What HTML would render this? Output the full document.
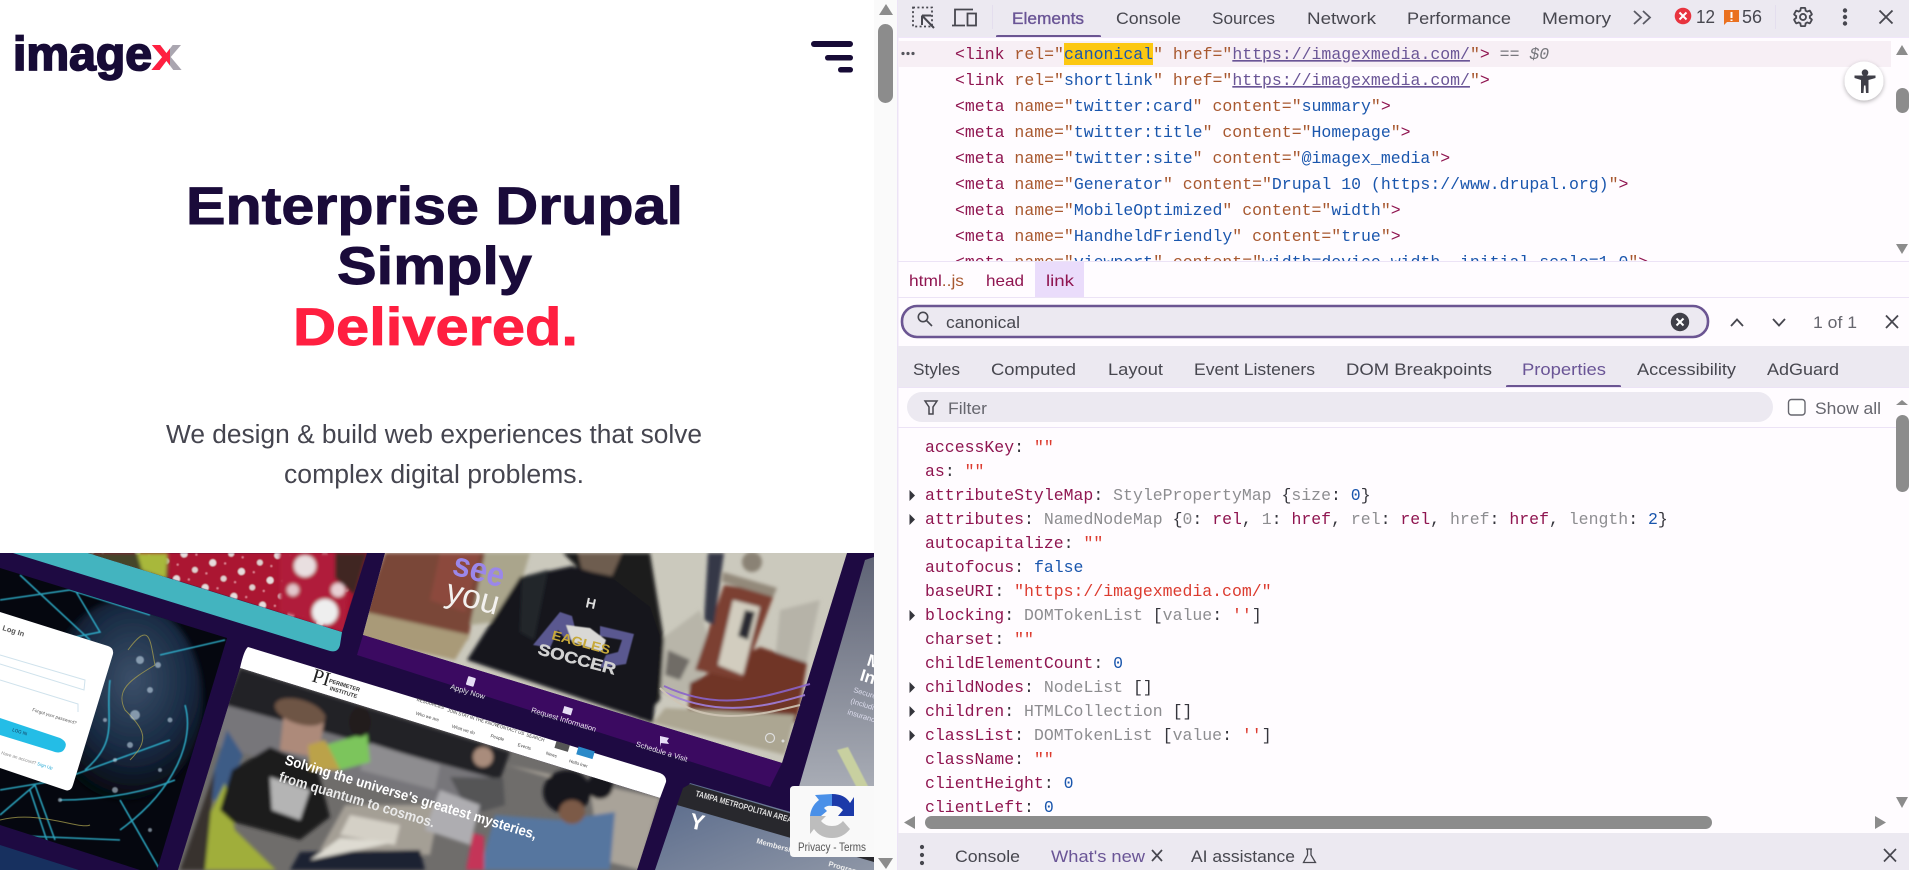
<!DOCTYPE html>
<html><head><meta charset="utf-8"><title>imagex</title>
<style>
html,body{margin:0;padding:0;background:#fff;width:1909px;height:870px;overflow:hidden}
svg{display:block}
text{white-space:pre}
.m{font-family:"Liberation Mono",monospace;font-size:16.5px}
.u{font-family:"Liberation Sans",sans-serif;font-size:16.5px;fill:#47474f}
.t{fill:#8f1550}.a{fill:#a8582f}.v{fill:#1a56ad}.l{fill:#6a5596;text-decoration:underline}.q{fill:#a8582f}.d{fill:#8f1550}
.k{fill:#8f1550}.c{fill:#35353c}.s{fill:#dc3b2f}.g{fill:#8d8d90}.n{fill:#1a56ad}
.w{font-family:"Liberation Sans",sans-serif;fill:#fff}
</style></head><body>
<svg xmlns="http://www.w3.org/2000/svg" width="1909" height="870" viewBox="0 0 1909 870">
<defs>
<clipPath id="hero"><rect x="0" y="553" width="874" height="317"/></clipPath>
<clipPath id="rx"><rect x="145" y="35" width="25" height="45"/></clipPath>
<clipPath id="el"><rect x="898" y="41" width="993" height="220"/></clipPath>
<clipPath id="pr"><rect x="898" y="428" width="993" height="384"/></clipPath>
<clipPath id="net"><path d="M0 568L227 638L157 870L140 870L0 825Z"/></clipPath>
<clipPath id="pi"><path d="M240 668L660 798L637 870L178 870Z"/></clipPath>
<clipPath id="ph"><path d="M385 553L847 553L782 763L363 635Z"/></clipPath>
<clipPath id="fl"><path d="M88 553L367 553L342 632Z"/></clipPath>
<filter id="b1" x="-5%" y="-5%" width="110%" height="110%"><feGaussianBlur stdDeviation="1.8"/></filter>
<filter id="b2" x="-10%" y="-10%" width="120%" height="120%"><feGaussianBlur stdDeviation="3"/></filter>
<filter id="b0"><feGaussianBlur stdDeviation="0.45"/></filter>
<filter id="sh" x="-30%" y="-30%" width="160%" height="160%"><feDropShadow dx="0" dy="1.5" stdDeviation="2" flood-color="#000" flood-opacity=".3"/></filter>
<pattern id="dots" width="30" height="26" patternUnits="userSpaceOnUse" patternTransform="rotate(17)"><rect width="30" height="26" fill="#ab1230"/><circle cx="8" cy="8" r="3.6" fill="#e6dcdc"/><circle cx="23" cy="20" r="3" fill="#e0d0d0"/><circle cx="20" cy="5" r="1" fill="#e9a"/><circle cx="5" cy="20" r="1" fill="#e9a"/></pattern>
<linearGradient id="gr1" x1="0" y1="0" x2="0" y2="1"><stop offset="0" stop-color="#5f6476"/><stop offset="1" stop-color="#a9adb6"/></linearGradient>
<linearGradient id="gr2" x1="0" y1="0" x2="1" y2="1"><stop offset="0" stop-color="#56688a"/><stop offset="1" stop-color="#8e96a6"/></linearGradient>
<radialGradient id="glob" cx=".55" cy=".4" r=".6"><stop offset="0" stop-color="#3c506a"/><stop offset=".6" stop-color="#182a42"/><stop offset="1" stop-color="#04070e"/></radialGradient>
</defs>

<!-- LEFT PAGE -->
<rect x="0" y="0" width="874" height="870" fill="#fff"/>
<rect x="874" y="0" width="23" height="870" fill="#fafafa"/>
<path d="M886 4L893 15H879Z" fill="#8c8c8c"/>
<rect x="878" y="24" width="15" height="79" rx="7.5" fill="#8c8c8c"/>
<path d="M886 869L893 858H878Z" fill="#8c8c8c"/>

<!-- logo -->
<text x="13" y="70" font-family="Liberation Sans,sans-serif" font-weight="700" font-size="47" fill="#170b36" stroke="#170b36" stroke-width="1.8" textLength="139" lengthAdjust="spacingAndGlyphs">image</text>
<text x="151" y="70" font-family="Liberation Sans,sans-serif" font-weight="700" font-size="47" fill="#aaa6b0" textLength="31" lengthAdjust="spacingAndGlyphs">x</text>
<text x="151" y="70" font-family="Liberation Sans,sans-serif" font-weight="700" font-size="47" fill="#ff1f40" textLength="31" lengthAdjust="spacingAndGlyphs" clip-path="url(#rx)">x</text>
<!-- hamburger -->
<g fill="#170b36"><rect x="811" y="41" width="42" height="6" rx="3"/><rect x="825" y="55" width="28" height="5.5" rx="2.7"/><rect x="838" y="67" width="15" height="5.5" rx="2.7"/></g>

<g font-family="Liberation Sans,sans-serif" font-weight="700" font-size="53" fill="#1a0b3a" stroke="#1a0b3a" stroke-width=".9" text-anchor="start">
<text x="186" y="224" textLength="497" lengthAdjust="spacingAndGlyphs">Enterprise Drupal</text>
<text x="337" y="284" textLength="195" lengthAdjust="spacingAndGlyphs">Simply</text>
<text x="293" y="345" textLength="285" lengthAdjust="spacingAndGlyphs" fill="#ff1f40" stroke="#ff1f40">Delivered.</text>
</g>
<g font-family="Liberation Sans,sans-serif" font-size="25.5" fill="#45454f">
<text x="166" y="443" textLength="536" lengthAdjust="spacingAndGlyphs">We design &amp; build web experiences that solve</text>
<text x="284" y="483" textLength="300" lengthAdjust="spacingAndGlyphs">complex digital problems.</text>
</g>

<!-- HERO collage -->
<g clip-path="url(#hero)">
<rect x="0" y="553" width="874" height="317" fill="#1e0a42"/>
<!-- teal + flowers -->
<path d="M13 553L330 651Q338 653 340 645L342 632L88 553Z" fill="#43b4bf"/>
<g clip-path="url(#fl)">
<path d="M88 553L367 553L342 632Z" fill="url(#dots)" filter="url(#b0)"/>
<g filter="url(#b1)">
<path d="M80 553L168 553L168 580L80 555Z" fill="#45452a"/><path d="M137 553L168 553L166 579L142 570Z" fill="#a8b83a"/>
<path d="M280 553L350 553L345 632L280 612Z" fill="#b01a3a"/>
<circle cx="305" cy="566" r="11" fill="#e9dfe0"/><circle cx="325" cy="612" r="13" fill="#eee"/><circle cx="293" cy="590" r="6" fill="#e3c7cc"/><circle cx="338" cy="590" r="7" fill="#e8d0d4"/>
<path d="M335 553L367 553L355 595L335 578Z" fill="#3f2622"/>
</g></g>
<!-- top middle photo -->
<path d="M385 553L847 553L782 763L363 635Z" fill="#cbc9bd"/>
<g clip-path="url(#ph)"><g filter="url(#b1)">
<path d="M385 553L485 553L468 640L363 612Z" fill="#7a4738"/>
<path d="M440 553L480 553L465 612L430 600Z" fill="#8c4a3c"/>
<path d="M366 612L470 635L455 660L360 640Z" fill="#a99a78"/>
<path d="M485 553L530 553L510 620L470 625Z" fill="#aaa58c"/>
<!-- bushes -->
<path d="M780 610L820 600L805 670L775 660Z" fill="#b6b3a8"/>
<path d="M660 640L700 610L715 660L680 700L655 690Z" fill="#b8b5a9"/>
<path d="M668 650L690 660L680 680L665 675Z" fill="#6f6c66"/>
<!-- pillar -->
<path d="M760 647L807 663L797 723L688 713L690 683Z" fill="#6f3428"/>
<path d="M724 585L775 592L742 680L695 670Z" fill="#7c3f32"/>
<path d="M733 600L760 607L743 675L718 665Z" fill="#d2cdbf"/>
<path d="M745 610L755 612L748 640L738 636Z" fill="#2c2c30"/>
<path d="M723 572L777 588L773 597L722 582Z" fill="#93897a"/>
<circle cx="752" cy="562" r="10" fill="#8a8274"/>
<path d="M708 553L724 553L714 625L704 620Z" fill="#343846"/>
<path d="M665 708L795 715L785 755L653 723Z" fill="#aca692"/>
<!-- hair -->
<path d="M563 553L650 553L664 640L660 700L640 720L620 640L600 590Z" fill="#1d1b1c"/>
<path d="M578 553L622 553L612 576L582 570Z" fill="#6e5d50"/>
<!-- shirt -->
<path d="M520 577L572 566L612 578L650 607L661 640L653 723L467 660Z" fill="#12161d"/>
<path d="M522 577L548 570L534 640L520 632Z" fill="#24262c"/>
</g></g>
<!-- eagle logo -->
<g filter="url(#b0)">
<path d="M533 645L560 612L572 616L578 640L566 640L558 630L550 648Z" fill="#5a5890"/>
<path d="M600 626L634 634L626 664L600 668L606 655L618 652L622 640L600 636Z" fill="#5a5890"/>
<path d="M566 625L590 628L606 640L602 652L572 642Z" fill="#d9d8d5"/>
</g>
<text transform="translate(551 639) rotate(15)" font-family="Liberation Sans,sans-serif" font-weight="700" font-size="13" fill="#c7a93a" textLength="60" lengthAdjust="spacingAndGlyphs">EAGLES</text>
<text transform="translate(537 654) rotate(15)" font-family="Liberation Sans,sans-serif" font-weight="700" font-size="16" fill="#d2d2d2" stroke="#d2d2d2" stroke-width=".4" textLength="80" lengthAdjust="spacingAndGlyphs">SOCCER</text>
<text transform="translate(585 607) rotate(12)" font-family="Liberation Sans,sans-serif" font-weight="700" font-size="14" fill="#ddd">H</text>
<!-- lines -->
<g fill="none" stroke-width="2" opacity=".9">
<path d="M664 686C720 712 760 698 810 684" stroke="#8a63c9"/><path d="M662 691C720 720 770 705 805 695" stroke="#a07fdc"/><path d="M660 688C700 730 760 715 800 705" stroke="#cfc5b5"/>
</g>
<circle cx="770" cy="738" r="4.5" fill="none" stroke="#ddd" stroke-width="1.2"/><circle cx="783" cy="741" r="1.5" fill="#ddd"/>
<!-- see you -->
<text transform="translate(451 574) rotate(15)" font-family="Liberation Sans,sans-serif" font-weight="700" font-size="34" fill="#9b87ea" textLength="52" lengthAdjust="spacingAndGlyphs">see</text>
<text transform="translate(444 601) rotate(15)" font-family="Liberation Sans,sans-serif" font-size="34" fill="#f3f1ef" textLength="54" lengthAdjust="spacingAndGlyphs">you</text>
<!-- purple band -->
<path d="M363 635L782 763L770 787L357 655Z" fill="#3b0a61"/>
<g class="w" font-size="7.5" opacity=".9" text-anchor="middle">
<text transform="translate(467 694) rotate(17)">Apply Now</text>
<text transform="translate(563 722) rotate(17)">Request Information</text>
<text transform="translate(661 754) rotate(17)">Schedule a Visit</text>
</g>
<rect x="467" y="677" width="8" height="9" rx="1" fill="#e6ddf5" transform="rotate(17 471 681)"/>
<rect x="563" y="707" width="9" height="7" fill="#e6ddf5" transform="rotate(17 567 711)"/>
<path d="M660 736l9 2-2 3 2 3-8-1-1 4z" fill="#e6ddf5"/>

<!-- network panel -->
<path d="M0 568L227 638L157 870L140 870L0 825Z" fill="#05070f"/>
<g clip-path="url(#net)">
<ellipse cx="125" cy="700" rx="78" ry="100" fill="url(#glob)" filter="url(#b2)"/>
<g fill="none" stroke="#33bcd8" stroke-width="1.6" opacity=".85" filter="url(#b0)">
<path d="M0 600L70 590L150 615"/><path d="M75 590L100 632L60 640"/><path d="M160 655L225 640"/>
<path d="M110 680C105 720 120 740 85 770"/><path d="M185 705C195 740 175 790 120 830"/>
<path d="M0 790L60 780L170 740"/><path d="M0 815L35 785L55 840M30 790L50 850"/><path d="M60 800C110 800 150 790 175 780"/>
<path d="M120 800L160 870"/><path d="M20 575L90 640"/><path d="M0 835L120 840"/>
</g>
<g fill="none" stroke="#a9a04e" stroke-width="1" opacity=".75"><path d="M128 650C150 620 150 640 155 665C130 680 115 690 125 710C145 730 150 740 130 760"/><path d="M0 820C40 810 80 830 90 825"/></g>
<g fill="#cfe3f2" opacity=".55" filter="url(#b0)"><circle cx="150" cy="690" r="3"/><circle cx="170" cy="720" r="2.5"/><circle cx="130" cy="745" r="3"/><circle cx="115" cy="760" r="2"/><circle cx="160" cy="770" r="2"/><circle cx="105" cy="720" r="2"/><circle cx="140" cy="660" r="4"/><circle cx="60" cy="800" r="2"/><circle cx="150" cy="830" r="2"/><circle cx="135" cy="715" r="5"/><circle cx="158" cy="665" r="3"/><circle cx="115" cy="790" r="3"/></g>
</g>
<!-- login card -->
<path d="M0 612L108 646Q114 648 113 654L73 785Q71 792 65 790L0 768Z" fill="#fff"/>
<path d="M0 718L60 738Q68 742 65 748Q62 755 52 751L0 735Z" fill="#24bde6"/>
<g fill="none" stroke="#cfe2ec" stroke-width="1"><path d="M0 655L85 680L84 690L0 664"/><path d="M0 680L78 704L78 712"/></g>
<text transform="translate(2 630) rotate(17)" font-family="Liberation Sans,sans-serif" font-weight="700" font-size="7.5" fill="#555">Log In</text>
<g font-family="Liberation Sans,sans-serif" font-size="4.5" fill="#888">
<text transform="translate(32 711) rotate(17)" fill="#555">Forgot your password?</text>
<text transform="translate(12 731) rotate(17)" fill="#135">LOG IN</text>
<text transform="translate(1 754) rotate(17)">Have an account? <tspan fill="#24a9d6">Sign Up</tspan></text>
</g>
<!-- bottom-left blue -->
<path d="M0 845L85 872L0 872Z" fill="#17305f"/>

<!-- PI panel -->
<path d="M248 647Q244 650 240 668L660 798L666 782Q667 776 660 773Z" fill="#fff"/>
<path d="M240 668L660 798L637 870L178 870Z" fill="#6f6d6b"/>
<g clip-path="url(#pi)">
<g filter="url(#b1)">
<path d="M240 668L510 752L500 780L225 705Z" fill="#232327"/>
<path d="M225 705L500 780L480 815L212 745Z" fill="#77767a"/>
<path d="M370 743L440 765L435 790L360 770Z" fill="#8e8d90"/>
<path d="M345 805L440 805L430 855L320 850Z" fill="#a49f95"/>
<path d="M227 730L243 755L220 810L208 790Z" fill="#3e5c86"/>
<path d="M207 820L225 783L235 830L276 870L200 870Z" fill="#a0ae3a"/>
<path d="M180 870L215 770L205 870Z" fill="#38322f"/>
<path d="M220 810L232 770L270 747L317 767L330 817L300 840L233 822Z" fill="#1b1b1e"/>
<path d="M270 777L310 790L300 820L272 810Z" fill="#b4b4b4"/>
<path d="M285 702L325 715L318 758L280 750Z" fill="#ad8a7a"/>
<ellipse cx="300" cy="712" rx="26" ry="12" fill="#6e5444" transform="rotate(17 300 712)"/>
<path d="M325 745L367 733L370 762L340 770Z" fill="#7cc55b"/>
<ellipse cx="360" cy="722" rx="11" ry="15" fill="#241e1c"/>
<path d="M308 745L325 740L340 770L310 770Z" fill="#bba24a"/>
<path d="M450 777L503 778L505 805L470 815Z" fill="#555556"/>
<circle cx="483" cy="757" r="10" fill="#a98c7c"/>
<path d="M440 790L480 805L470 845L425 830Z" fill="#aeadb1"/>
<path d="M507 765L660 798L640 870L600 860L590 790Z" fill="#a9a399"/>
<path d="M495 815L560 820L615 812L610 870L480 870Z" fill="#56769f"/>
<ellipse cx="567" cy="792" rx="24" ry="22" fill="#16161b"/>
<ellipse cx="572" cy="812" rx="13" ry="12" fill="#7c5a47"/>
<circle cx="600" cy="786" r="13" fill="#16161b"/>
<path d="M473 833L484 836L484 870L466 870Z" fill="#c43658"/>
<path d="M350 815L400 825L395 845L340 835Z" fill="#d4d0c6"/>
<path d="M300 852L420 850L425 870L290 870Z" fill="#1a2030"/>
<path d="M340 838L395 842L310 860Z" fill="#dedbd2"/>
</g>
</g>
<text transform="translate(284 764) rotate(16.7)" font-family="Liberation Sans,sans-serif" font-weight="700" font-size="14.4" fill="#fff" textLength="262" lengthAdjust="spacingAndGlyphs">Solving the universe's greatest mysteries,</text>
<text transform="translate(278 781) rotate(16.7)" font-family="Liberation Sans,sans-serif" font-weight="700" font-size="14.4" fill="#e9e9e9" textLength="162" lengthAdjust="spacingAndGlyphs">from quantum to cosmos.</text>
<text transform="translate(311 681) rotate(17)" font-family="Liberation Serif,serif" font-size="20" fill="#222">PI</text>
<g font-family="Liberation Sans,sans-serif" font-weight="700" font-size="5.5" fill="#333" text-anchor="middle"><text transform="translate(344 687) rotate(17)">PERIMETER</text><text transform="translate(343 694) rotate(17)">INSTITUTE</text></g>
<g font-family="Liberation Sans,sans-serif" font-size="4.5" fill="#444" text-anchor="middle">
<text transform="translate(430 705) rotate(17)">RESOURCES</text><text transform="translate(427 718) rotate(17)">Who we are</text><text transform="translate(452 713) rotate(17)">JOIN</text><text transform="translate(478 721) rotate(17)">STAY IN THE KNOW</text><text transform="translate(510 731) rotate(17)">CONTACT US</text><text transform="translate(535 739) rotate(17)">SEARCH</text><text transform="translate(463 731) rotate(17)">What we do</text><text transform="translate(497 739) rotate(17)">People</text><text transform="translate(524 748) rotate(17)">Events</text><text transform="translate(551 756) rotate(17)">News</text><text transform="translate(578 765) rotate(17)">Hello Iner</text>
</g>
<rect x="577" y="749" width="17" height="8" fill="#2b8ac9" transform="rotate(17 586 753)"/>
<rect x="555" y="743" width="14" height="7" fill="#555" transform="rotate(17 562 747)"/>

<!-- right gray panel -->
<path d="M865 560L874 557L874 790L798 790Z" fill="url(#gr1)"/>
<path d="M837 750L848 747L870 790L858 790Z" fill="#c8d0a0" filter="url(#b0)"/>
<g font-family="Liberation Sans,sans-serif" fill="#fff"><text transform="translate(866 665) rotate(17)" font-size="17" font-weight="700">M</text><text transform="translate(859 680) rotate(17)" font-size="17" font-weight="700">In</text>
<text transform="translate(853 692) rotate(17)" font-size="7.5" fill="#dde">Secure</text><text transform="translate(850 703) rotate(17)" font-size="7.5" fill="#dde">(Includi</text><text transform="translate(847 714) rotate(17)" font-size="7.5" fill="#dde">insuranc</text></g>

<!-- Tampa panel -->
<path d="M690 783L874 836L874 870L655 870L677 805Z" fill="url(#gr2)"/>
<path d="M690 784L874 838L874 862L677 805L683 788Z" fill="#28282d"/>
<text transform="translate(695 796) rotate(15.5)" font-family="Liberation Sans,sans-serif" font-weight="700" font-size="8.5" fill="#ddd" textLength="100" lengthAdjust="spacingAndGlyphs">TAMPA METROPOLITAN AREA</text>
<text x="690" y="830" transform="rotate(12 700 822)" font-family="Liberation Sans,sans-serif" font-weight="700" font-size="22" fill="#fff">Y</text>
<text transform="translate(756 843) rotate(15.5)" font-family="Liberation Sans,sans-serif" font-weight="700" font-size="7.5" fill="#eee">Membership</text>
<text transform="translate(828 866) rotate(15.5)" font-family="Liberation Sans,sans-serif" font-weight="700" font-size="7.5" fill="#eee">Programs</text>
</g>

<!-- reCAPTCHA -->
<path d="M794 786H874V857H794Q790 857 790 853V790Q790 786 794 786Z" fill="#f9f9f9"/>
<path d="M810 816Q811 806 819 800L815 795L832 794L832 806Q827 805 824 808L827 811L821 816Z" fill="#4a90e8"/>
<path d="M832 794Q845 794 850 803L854 797L854 816L838 816L843 810Q839 805 832 806Z" fill="#1c3aa9"/>
<path d="M810 816L826 816L821 821Q825 826 832 826Q839 826 843 821L850 829Q843 838 832 838Q820 838 814 829L810 834Z" fill="#bdbdbd"/>
<text x="798" y="851" font-family="Liberation Sans,sans-serif" font-size="12" fill="#555" textLength="68" lengthAdjust="spacingAndGlyphs">Privacy - Terms</text>

<!-- DEVTOOLS -->
<rect x="897" y="0" width="1012" height="870" fill="#fffcff"/>
<rect x="897" y="0" width="1.5" height="870" fill="#ece3f6"/>
<rect x="898" y="0" width="1011" height="37" fill="#ece9f1"/>
<rect x="898" y="37" width="1011" height="1" fill="#f0e6fa"/>
<!-- top icons -->
<g fill="none" stroke="#47474f" stroke-width="1.8">
<rect x="913" y="7.5" width="19" height="19" stroke-dasharray="2 2.4"/>
<path d="M922 15.5H931M922 15.5V25M922.5 16L934 28" stroke-width="2"/>
<path d="M952 25.5H965M955 25V9.5H973"/>
<rect x="967.5" y="13.5" width="8.5" height="12"/>
</g>
<rect x="992" y="5" width="1" height="24" fill="#e4deee"/>
<g class="u">
<text x="1012" y="24" style="fill:#6a5596" stroke="#6a5596" stroke-width=".35" textLength="72" lengthAdjust="spacingAndGlyphs">Elements</text>
<text x="1116" y="24" textLength="65" lengthAdjust="spacingAndGlyphs">Console</text>
<text x="1212" y="24" textLength="63" lengthAdjust="spacingAndGlyphs">Sources</text>
<text x="1307" y="24" textLength="69" lengthAdjust="spacingAndGlyphs">Network</text>
<text x="1407" y="24" textLength="104" lengthAdjust="spacingAndGlyphs">Performance</text>
<text x="1542" y="24" textLength="69" lengthAdjust="spacingAndGlyphs">Memory</text>
</g>
<path d="M996 37V36Q996 35 998 35H1099Q1101 35 1101 36V37Z" fill="#6b5592"/>
<g fill="none" stroke="#5a5a64" stroke-width="1.8"><path d="M1634 11L1641 17.5L1634 24M1643 11L1650 17.5L1643 24"/></g>
<circle cx="1683" cy="16" r="8.3" fill="#e8343f"/>
<path d="M1679.5 12.5L1686.5 19.5M1686.5 12.5L1679.5 19.5" stroke="#fff" stroke-width="2"/>
<text class="u" x="1696" y="23" style="font-size:18px" textLength="19" lengthAdjust="spacingAndGlyphs">12</text>
<path d="M1724 10H1739V22H1727L1724 25Z" fill="#ea7120"/>
<path d="M1731.5 12V18M1731.5 19.5V21" stroke="#fff" stroke-width="2"/>
<text class="u" x="1742" y="23" style="font-size:18px" textLength="20" lengthAdjust="spacingAndGlyphs">56</text>
<rect x="1775" y="5" width="1" height="24" fill="#e4deee"/>
<g transform="translate(1791.6 5.6) scale(.95)" fill="none" stroke="#47474f" stroke-width="1.9"><path d="M19.14,12.94c0.04-0.3,0.06-0.61,0.06-0.94c0-0.32-0.02-0.64-0.07-0.94l2.03-1.58c0.18-0.14,0.23-0.41,0.12-0.61 l-1.92-3.32c-0.12-0.22-0.37-0.29-0.59-0.22l-2.39,0.96c-0.5-0.38-1.03-0.7-1.62-0.94L14.4,2.81c-0.04-0.24-0.24-0.41-0.48-0.41 h-3.84c-0.24,0-0.43,0.17-0.47,0.41L9.25,5.35C8.66,5.59,8.12,5.92,7.63,6.29L5.24,5.33c-0.22-0.08-0.47,0-0.59,0.22L2.74,8.87 C2.62,9.08,2.66,9.34,2.86,9.48l2.03,1.58C4.84,11.36,4.8,11.69,4.8,12s0.02,0.64,0.07,0.94l-2.03,1.58 c-0.18,0.14-0.23,0.41-0.12,0.61l1.92,3.32c0.12,0.22,0.37,0.29,0.59,0.22l2.39-0.96c0.5,0.38,1.03,0.7,1.62,0.94l0.36,2.54 c0.05,0.24,0.24,0.41,0.48,0.41h3.84c0.24,0,0.44-0.17,0.47-0.41l0.36-2.54c0.59-0.24,1.13-0.56,1.62-0.94l2.39,0.96 c0.22,0.08,0.47,0,0.59-0.22l1.92-3.32c0.12-0.22,0.07-0.47-0.12-0.61L19.14,12.94z"/><circle cx="12" cy="12" r="3.2"/></g>
<g fill="#47474f"><circle cx="1845" cy="10.5" r="2.2"/><circle cx="1845" cy="17" r="2.2"/><circle cx="1845" cy="23.5" r="2.2"/></g>
<path d="M1879.5 10.5L1892.5 23.5M1892.5 10.5L1879.5 23.5" stroke="#47474f" stroke-width="1.9"/>

<!-- elements tree -->
<rect x="898" y="41" width="993" height="26" fill="#f7eff5"/>
<rect x="1064" y="43" width="89" height="22" fill="#fcc812"/>
<g fill="#55555c"><circle cx="903" cy="53.5" r="1.6"/><circle cx="908" cy="53.5" r="1.6"/><circle cx="913" cy="53.5" r="1.6"/></g>
<g class="m" clip-path="url(#el)">
<text x="955" y="59"><tspan class="t">&lt;link</tspan> <tspan class="a">rel</tspan><tspan class="q">="</tspan><tspan class="v">canonical</tspan><tspan class="q">"</tspan> <tspan class="a">href</tspan><tspan class="q">="</tspan><tspan class="l">https://imagexmedia.com/</tspan><tspan class="q">"</tspan><tspan class="t">&gt;</tspan> <tspan fill="#77777d">== </tspan><tspan fill="#77777d" font-style="italic">$0</tspan></text>
<text x="955" y="85"><tspan class="t">&lt;link</tspan> <tspan class="a">rel</tspan><tspan class="q">="</tspan><tspan class="v">shortlink</tspan><tspan class="q">"</tspan> <tspan class="a">href</tspan><tspan class="q">="</tspan><tspan class="l">https://imagexmedia.com/</tspan><tspan class="q">"</tspan><tspan class="t">&gt;</tspan></text>
<text x="955" y="111"><tspan class="t">&lt;meta</tspan> <tspan class="a">name</tspan><tspan class="q">="</tspan><tspan class="v">twitter:card</tspan><tspan class="q">"</tspan> <tspan class="a">content</tspan><tspan class="q">="</tspan><tspan class="v">summary</tspan><tspan class="q">"</tspan><tspan class="t">&gt;</tspan></text>
<text x="955" y="137"><tspan class="t">&lt;meta</tspan> <tspan class="a">name</tspan><tspan class="q">="</tspan><tspan class="v">twitter:title</tspan><tspan class="q">"</tspan> <tspan class="a">content</tspan><tspan class="q">="</tspan><tspan class="v">Homepage</tspan><tspan class="q">"</tspan><tspan class="t">&gt;</tspan></text>
<text x="955" y="163"><tspan class="t">&lt;meta</tspan> <tspan class="a">name</tspan><tspan class="q">="</tspan><tspan class="v">twitter:site</tspan><tspan class="q">"</tspan> <tspan class="a">content</tspan><tspan class="q">="</tspan><tspan class="v">@imagex_media</tspan><tspan class="q">"</tspan><tspan class="t">&gt;</tspan></text>
<text x="955" y="189"><tspan class="t">&lt;meta</tspan> <tspan class="a">name</tspan><tspan class="q">="</tspan><tspan class="v">Generator</tspan><tspan class="q">"</tspan> <tspan class="a">content</tspan><tspan class="q">="</tspan><tspan class="v">Drupal 10 (https://www.drupal.org)</tspan><tspan class="q">"</tspan><tspan class="t">&gt;</tspan></text>
<text x="955" y="215"><tspan class="t">&lt;meta</tspan> <tspan class="a">name</tspan><tspan class="q">="</tspan><tspan class="v">MobileOptimized</tspan><tspan class="q">"</tspan> <tspan class="a">content</tspan><tspan class="q">="</tspan><tspan class="v">width</tspan><tspan class="q">"</tspan><tspan class="t">&gt;</tspan></text>
<text x="955" y="241"><tspan class="t">&lt;meta</tspan> <tspan class="a">name</tspan><tspan class="q">="</tspan><tspan class="v">HandheldFriendly</tspan><tspan class="q">"</tspan> <tspan class="a">content</tspan><tspan class="q">="</tspan><tspan class="v">true</tspan><tspan class="q">"</tspan><tspan class="t">&gt;</tspan></text>
<text x="955" y="267"><tspan class="t">&lt;meta</tspan> <tspan class="a">name</tspan><tspan class="q">="</tspan><tspan class="v">viewport</tspan><tspan class="q">"</tspan> <tspan class="a">content</tspan><tspan class="q">="</tspan><tspan class="v">width=device-width, initial-scale=1.0</tspan><tspan class="q">"</tspan><tspan class="t">&gt;</tspan></text>
</g>
<!-- elements scrollbar -->
<path d="M1902 45L1908 55H1896Z" fill="#8c8c8c"/>
<rect x="1896" y="88" width="13" height="25" rx="6.5" fill="#8c8c8c"/>
<path d="M1902 254L1908 244H1896Z" fill="#8c8c8c"/>
<!-- a11y button -->
<circle cx="1864" cy="81" r="19.5" fill="#fff" filter="url(#sh)"/>
<circle cx="1865" cy="72.7" r="3.3" fill="#3f3f48"/>
<path d="M1854.5 75.5L1875.5 75.5L1875.5 78L1868.5 80L1868.5 93L1866 93L1865.5 85.5L1864 85.5L1863.5 93L1861 93L1861 80L1854.5 78Z" fill="#3f3f48"/>

<!-- breadcrumbs -->
<rect x="898" y="261" width="1011" height="1" fill="#ece3f6"/>
<rect x="1035" y="262" width="49" height="35" fill="#eadcfb"/>
<rect x="898" y="297" width="1011" height="1" fill="#ece3f6"/>
<g class="u" style="font-size:16px">
<text x="909" y="286" textLength="55" lengthAdjust="spacingAndGlyphs"><tspan class="t">html</tspan><tspan class="a">..js</tspan></text>
<text x="986" y="286" textLength="38" lengthAdjust="spacingAndGlyphs" style="fill:#8f1550">head</text>
<text x="1046" y="286" textLength="28" lengthAdjust="spacingAndGlyphs" style="fill:#8f1550">link</text>
</g>
<!-- search -->
<rect x="902" y="306" width="806" height="31" rx="15" fill="#ece9f1" stroke="#6b5592" stroke-width="2.6"/>
<g fill="none" stroke="#47474f" stroke-width="1.6"><circle cx="923" cy="317" r="4.7"/><path d="M926.5 320.5L932 326"/></g>
<text class="u" x="946" y="328" textLength="74" lengthAdjust="spacingAndGlyphs">canonical</text>
<circle cx="1680" cy="322" r="9.2" fill="#3f3f48"/>
<path d="M1676.5 318.5L1683.5 325.5M1683.5 318.5L1676.5 325.5" stroke="#fff" stroke-width="2"/>
<g fill="none" stroke="#47474f" stroke-width="1.8"><path d="M1731 326L1737 319.5L1743 326"/><path d="M1773 319L1779 325.5L1785 319"/><path d="M1886 315.5L1898 328M1898 315.5L1886 328"/></g>
<text class="u" x="1813" y="328" textLength="44" lengthAdjust="spacingAndGlyphs" style="fill:#66666e">1 of 1</text>
<!-- tabs -->
<rect x="898" y="346" width="1011" height="41" fill="#ece9f1"/>
<g class="u">
<text x="913" y="375" textLength="47" lengthAdjust="spacingAndGlyphs">Styles</text>
<text x="991" y="375" textLength="85" lengthAdjust="spacingAndGlyphs">Computed</text>
<text x="1108" y="375" textLength="55" lengthAdjust="spacingAndGlyphs">Layout</text>
<text x="1194" y="375" textLength="121" lengthAdjust="spacingAndGlyphs">Event Listeners</text>
<text x="1346" y="375" textLength="146" lengthAdjust="spacingAndGlyphs">DOM Breakpoints</text>
<text x="1522" y="375" textLength="84" lengthAdjust="spacingAndGlyphs" style="fill:#6a5596">Properties</text>
<text x="1637" y="375" textLength="99" lengthAdjust="spacingAndGlyphs">Accessibility</text>
<text x="1767" y="375" textLength="72" lengthAdjust="spacingAndGlyphs">AdGuard</text>
</g>
<path d="M1506 387V386Q1506 385 1508 385H1619Q1621 385 1621 386V387Z" fill="#6b5592"/>
<rect x="898" y="387" width="1011" height="1" fill="#ece3f6"/>
<!-- filter -->
<rect x="907" y="392" width="866" height="30" rx="15" fill="#ece9f1"/>
<path d="M925 401H937L933 407V414L929 414V407Z" fill="none" stroke="#47474f" stroke-width="1.5"/>
<text class="u" x="948" y="414" textLength="39" lengthAdjust="spacingAndGlyphs" style="fill:#66666e">Filter</text>
<rect x="1788.5" y="399.5" width="16.5" height="15.5" rx="3" fill="#fff" stroke="#66666e" stroke-width="1.4"/>
<text class="u" x="1815" y="414" textLength="66" lengthAdjust="spacingAndGlyphs" style="fill:#66666e">Show all</text>
<rect x="898" y="427" width="1011" height="1" fill="#ece3f6"/>
<!-- properties -->
<g class="m" clip-path="url(#pr)">
<text x="925" y="452"><tspan class="k">accessKey</tspan><tspan class="c">: </tspan><tspan class="s">""</tspan></text>
<text x="925" y="476"><tspan class="k">as</tspan><tspan class="c">: </tspan><tspan class="s">""</tspan></text>
<text x="925" y="500"><tspan class="k">attributeStyleMap</tspan><tspan class="c">: </tspan><tspan class="g">StylePropertyMap </tspan><tspan class="c">{</tspan><tspan class="g">size</tspan><tspan class="c">: </tspan><tspan class="n">0</tspan><tspan class="c">}</tspan></text>
<text x="925" y="524"><tspan class="k">attributes</tspan><tspan class="c">: </tspan><tspan class="g">NamedNodeMap </tspan><tspan class="c">{</tspan><tspan class="g">0</tspan><tspan class="c">: </tspan><tspan class="k">rel</tspan><tspan class="c">, </tspan><tspan class="g">1</tspan><tspan class="c">: </tspan><tspan class="k">href</tspan><tspan class="c">, </tspan><tspan class="g">rel</tspan><tspan class="c">: </tspan><tspan class="k">rel</tspan><tspan class="c">, </tspan><tspan class="g">href</tspan><tspan class="c">: </tspan><tspan class="k">href</tspan><tspan class="c">, </tspan><tspan class="g">length</tspan><tspan class="c">: </tspan><tspan class="n">2</tspan><tspan class="c">}</tspan></text>
<text x="925" y="548"><tspan class="k">autocapitalize</tspan><tspan class="c">: </tspan><tspan class="s">""</tspan></text>
<text x="925" y="572"><tspan class="k">autofocus</tspan><tspan class="c">: </tspan><tspan class="n">false</tspan></text>
<text x="925" y="596"><tspan class="k">baseURI</tspan><tspan class="c">: </tspan><tspan class="s">"https://imagexmedia.com/"</tspan></text>
<text x="925" y="620"><tspan class="k">blocking</tspan><tspan class="c">: </tspan><tspan class="g">DOMTokenList </tspan><tspan class="c">[</tspan><tspan class="g">value</tspan><tspan class="c">: </tspan><tspan class="s">''</tspan><tspan class="c">]</tspan></text>
<text x="925" y="644"><tspan class="k">charset</tspan><tspan class="c">: </tspan><tspan class="s">""</tspan></text>
<text x="925" y="668"><tspan class="k">childElementCount</tspan><tspan class="c">: </tspan><tspan class="n">0</tspan></text>
<text x="925" y="692"><tspan class="k">childNodes</tspan><tspan class="c">: </tspan><tspan class="g">NodeList </tspan><tspan class="c">[]</tspan></text>
<text x="925" y="716"><tspan class="k">children</tspan><tspan class="c">: </tspan><tspan class="g">HTMLCollection </tspan><tspan class="c">[]</tspan></text>
<text x="925" y="740"><tspan class="k">classList</tspan><tspan class="c">: </tspan><tspan class="g">DOMTokenList </tspan><tspan class="c">[</tspan><tspan class="g">value</tspan><tspan class="c">: </tspan><tspan class="s">''</tspan><tspan class="c">]</tspan></text>
<text x="925" y="764"><tspan class="k">className</tspan><tspan class="c">: </tspan><tspan class="s">""</tspan></text>
<text x="925" y="788"><tspan class="k">clientHeight</tspan><tspan class="c">: </tspan><tspan class="n">0</tspan></text>
<text x="925" y="812"><tspan class="k">clientLeft</tspan><tspan class="c">: </tspan><tspan class="n">0</tspan></text>
</g>
<g fill="#35353c">
<path d="M909.5 490V501L915 495.5Z"/><path d="M909.5 514V525L915 519.5Z"/><path d="M909.5 610V621L915 615.5Z"/><path d="M909.5 682V693L915 687.5Z"/><path d="M909.5 706V717L915 711.5Z"/><path d="M909.5 730V741L915 735.5Z"/>
</g>
<!-- props scrollbars -->
<path d="M1902 400L1908 405H1896Z" fill="#8c8c8c"/>
<rect x="1896" y="415" width="13" height="77" rx="6.5" fill="#8c8c8c"/>
<path d="M1902 808L1908 797H1896Z" fill="#8c8c8c"/>
<path d="M904 822.5L915 816V829Z" fill="#8c8c8c"/>
<rect x="925" y="816" width="787" height="13" rx="6.5" fill="#8c8c8c"/>
<path d="M1886 822.5L1875 816V829Z" fill="#8c8c8c"/>
<!-- bottom bar -->
<rect x="898" y="833" width="1011" height="37" fill="#ece9f1"/>
<g fill="#47474f"><circle cx="922" cy="847" r="2.1"/><circle cx="922" cy="855" r="2.1"/><circle cx="922" cy="863" r="2.1"/></g>
<g class="u">
<text x="955" y="862" textLength="65" lengthAdjust="spacingAndGlyphs">Console</text>
<text x="1051" y="862" textLength="94" lengthAdjust="spacingAndGlyphs" style="fill:#6a5596">What's new</text>
<text x="1191" y="862" textLength="104" lengthAdjust="spacingAndGlyphs">AI assistance</text>
</g>
<g fill="none" stroke="#47474f" stroke-width="1.7">
<path d="M1152 850L1162 861M1162 850L1152 861"/>
<path d="M1884 849L1896 861.5M1896 849L1884 861.5"/>
<path d="M1306 849H1312M1307.5 849V855L1303.5 862.5H1315.5L1311 855V849" stroke-width="1.3"/>
</g>
</svg>
</body></html>
